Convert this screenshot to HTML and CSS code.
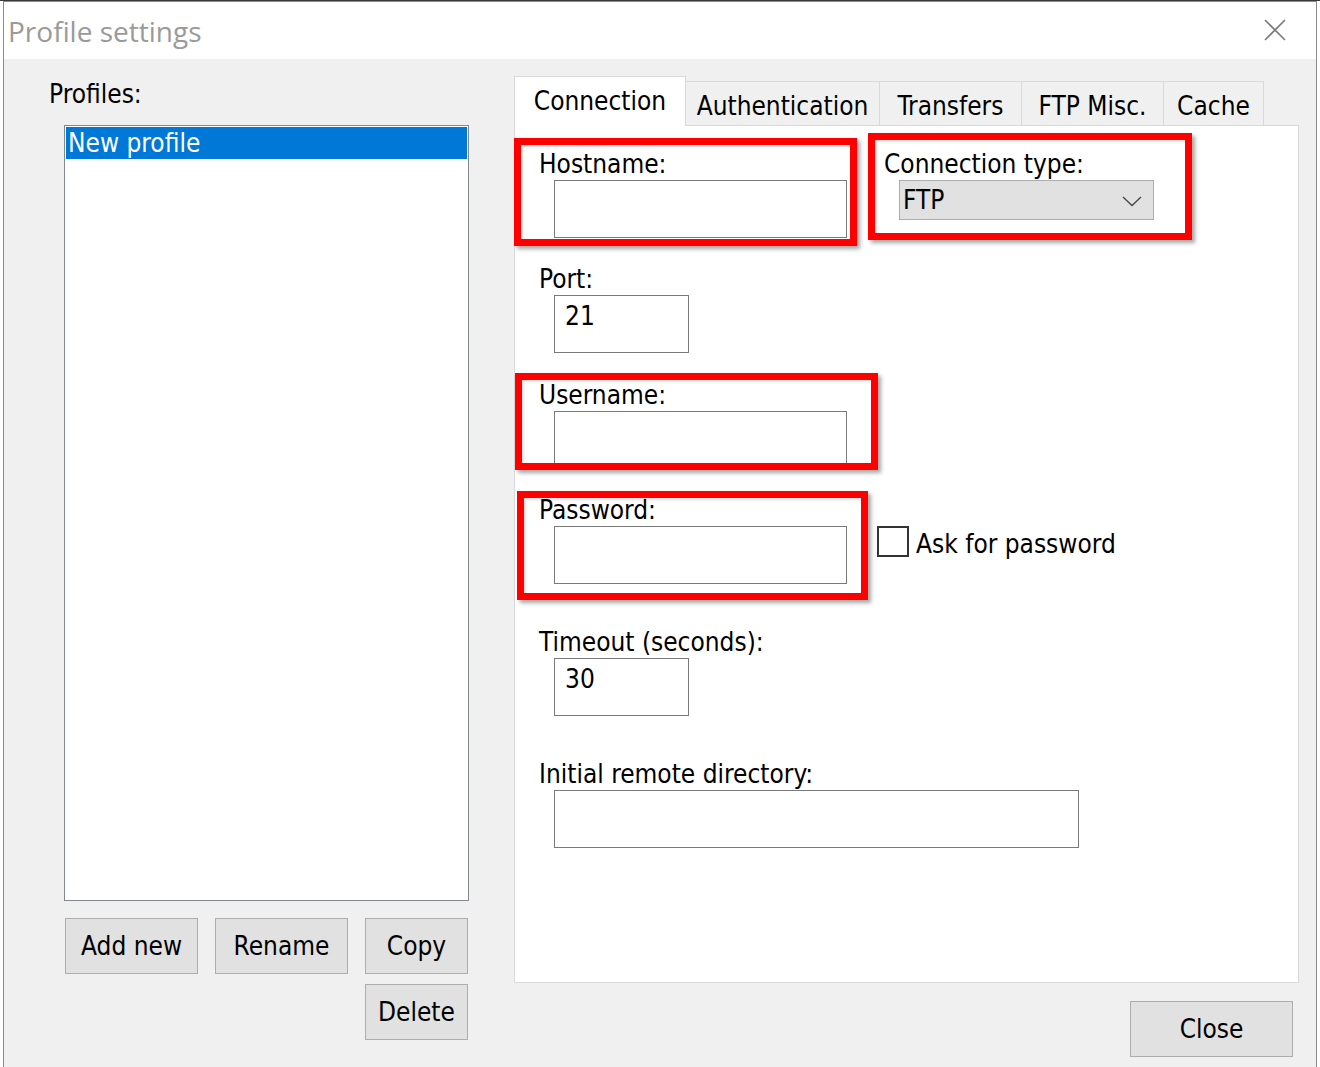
FILE: index.html
```html
<!DOCTYPE html>
<html lang="en">
<head>
<meta charset="utf-8">
<title>Profile settings</title>
<link rel="stylesheet" href="styles.css">
</head>
<body>
<div class="screen">
  <div class="dialog">
    <div class="titlebar">
      <div class="title">Profile settings</div>
      <svg class="close-x" width="22" height="22" viewBox="0 0 22 22"><path d="M1 1 L21 21 M21 1 L1 21" stroke="#7a7a7a" stroke-width="1.6" fill="none"/></svg>
    </div>
    <div class="body">
      <div class="left">
        <div class="label">Profiles:</div>
        <div class="listbox">
          <div class="list-item selected">New profile</div>
        </div>
        <div class="btn-grid">
          <div class="btn">Add new</div>
          <div class="btn">Rename</div>
          <div class="btn">Copy</div>
          <div class="btn btn-delete">Delete</div>
        </div>
      </div>
      <div class="right">
        <div class="tabs">
          <div class="tab active tab-conn">Connection</div>
          <div class="tab tab-auth">Authentication</div>
          <div class="tab tab-trans">Transfers</div>
          <div class="tab tab-ftp">FTP Misc.</div>
          <div class="tab tab-cache">Cache</div>
        </div>
        <div class="panel">
          <div class="row">
            <div class="group">
              <div class="label">Hostname:</div>
              <div class="input wide"></div>
            </div>
            <div class="group conn-type">
              <div class="label">Connection type:</div>
              <div class="combo"><span>FTP</span>
                <svg width="20" height="11" viewBox="0 0 20 11"><path d="M1 1 L10 9.5 L19 1" stroke="#444" stroke-width="1.3" fill="none"/></svg>
              </div>
            </div>
          </div>
          <div class="group g-port">
            <div class="label">Port:</div>
            <div class="input short">21</div>
          </div>
          <div class="group g-user">
            <div class="label">Username:</div>
            <div class="input wide"></div>
          </div>
          <div class="row g-pass">
            <div class="group">
              <div class="label">Password:</div>
              <div class="input wide"></div>
            </div>
            <div class="check">
              <div class="checkbox"></div>
              <div class="check-label">Ask for password</div>
            </div>
          </div>
          <div class="group g-timeout">
            <div class="label">Timeout (seconds):</div>
            <div class="input short">30</div>
          </div>
          <div class="group g-dir">
            <div class="label">Initial remote directory:</div>
            <div class="input xwide"></div>
          </div>
        </div>
        <div class="footer">
          <div class="btn btn-close">Close</div>
        </div>
      </div>
    </div>
  </div>
  <div class="mark mark-host"></div>
  <div class="mark mark-conn"></div>
  <div class="mark mark-user"></div>
  <div class="mark mark-pass"></div>
</div>
</body>
</html>
```
FILE: styles.css
```css
* { box-sizing: border-box; }
html, body { margin: 0; padding: 0; }
body {
  background: #ffffff;
  width: 1320px;
  height: 1067px;
  overflow: hidden;
  font-family: "DejaVu Sans Condensed", "DejaVu Sans", sans-serif;
  font-stretch: condensed;
  font-size: 26px;
  color: #000;
}
.screen {
  position: relative;
  width: 1320px;
  height: 1067px;
  border-top: 1px solid #3a3a3a;
}
.dialog {
  margin-left: 3px;
  width: 1314px;
  height: 1066px;
  border: 1px solid #8a8a8a;
  border-bottom: none;
  background: #f0f0f0;
  display: flex;
  flex-direction: column;
}
.titlebar {
  flex: 0 0 57px;
  height: 57px;
  background: #ffffff;
  display: flex;
  justify-content: space-between;
  align-items: flex-start;
}
.title {
  font-family: "Open Sans", "Noto Sans", sans-serif;
  font-stretch: normal;
  font-size: 28px;
  line-height: 38px;
  color: #9a9a9a;
  padding-top: 10px;
  padding-left: 4px;
}
.close-x {
  margin-top: 17px;
  margin-right: 30px;
}
.body {
  flex: 1 1 auto;
  display: flex;
  align-items: flex-start;
  padding: 0 0 0 45px;
}
.label {
  line-height: 31px;
  white-space: nowrap;
}
.left {
  width: 420px;
  padding-top: 20px;
}
.listbox {
  margin-top: 15px;
  margin-left: 15px;
  width: 405px;
  height: 776px;
  background: #fff;
  border: 1px solid #828790;
  padding: 1px;
}
.list-item {
  height: 32px;
  line-height: 32px;
  padding-left: 2px;
}
.list-item.selected {
  background: #0078d7;
  color: #fff;
}
.btn-grid {
  margin-top: 17px;
  margin-left: 16px;
  display: grid;
  grid-template-columns: 133px 133px 103px;
  column-gap: 17px;
  row-gap: 10px;
}
.btn {
  height: 56px;
  background: #e1e1e1;
  border: 1px solid #adadad;
  display: flex;
  align-items: center;
  justify-content: center;
  line-height: 31px;
  white-space: nowrap;
}
.btn-delete { grid-column: 3; }
.right {
  margin-left: 45px;
  width: 785px;
  padding-top: 17px;
}
.tabs {
  display: flex;
  align-items: flex-end;
  height: 49px;
}
.tab {
  height: 44px;
  background: #f0f0f0;
  border: 1px solid #d9d9d9;
  border-bottom: none;
  margin-left: -1px;
  text-align: center;
  line-height: 31px;
  padding-top: 9px;
  white-space: nowrap;
}
.tab.active {
  height: 50px;
  margin-left: 0;
  margin-bottom: -1px;
  background: #fff;
  position: relative;
  z-index: 1;
}
.tab-conn { width: 172px; }
.tab-auth { width: 195px; }
.tab-trans { width: 143px; }
.tab-ftp { width: 143px; }
.tab-cache { width: 101px; }
.panel {
  height: 858px;
  background: #fff;
  border: 1px solid #d9d9d9;
  padding: 23px 0 0 24px;
}
.row {
  display: flex;
  align-items: flex-start;
}
.input {
  margin-left: 15px;
  height: 58px;
  border: 1px solid #7a7a7a;
  background: #fff;
  padding: 5px 10px;
  line-height: 30px;
}
.input.wide { width: 293px; }
.input.short { width: 135px; }
.input.xwide { width: 525px; }
.conn-type { margin-left: 37px; }
.combo {
  margin-left: 15px;
  width: 255px;
  height: 40px;
  background: #e1e1e1;
  border: 1px solid #adadad;
  display: flex;
  align-items: center;
  justify-content: space-between;
  padding: 0 11px 0 3px;
  line-height: 38px;
}
.combo svg { margin-top: 2px; }
.g-port { margin-top: 26px; }
.g-user { margin-top: 27px; }
.g-pass { margin-top: 26px; }
.g-timeout { margin-top: 43px; }
.g-dir { margin-top: 43px; }
.check {
  margin-left: 30px;
  margin-top: 31px;
  display: flex;
  align-items: flex-start;
}
.checkbox {
  width: 32px;
  height: 31px;
  border: 2px solid #333;
  background: #fff;
}
.check-label {
  margin-left: 7px;
  line-height: 31px;
  margin-top: 3px;
  white-space: nowrap;
}
.footer {
  display: flex;
  justify-content: flex-end;
  padding-top: 18px;
  padding-right: 6px;
}
.btn-close { width: 163px; }
.mark {
  position: absolute;
  border: 7px solid #ff0000;
  box-shadow: 3px 3px 4px rgba(0, 0, 0, 0.35), inset 2px 2px 3px rgba(0, 0, 0, 0.12);
}
.mark-host { left: 514px; top: 137px; width: 343px; height: 108px; }
.mark-conn { left: 868px; top: 132px; width: 324px; height: 107px; }
.mark-user { left: 515px; top: 372px; width: 363px; height: 97px; }
.mark-pass { left: 517px; top: 490px; width: 351px; height: 109px; }
```
